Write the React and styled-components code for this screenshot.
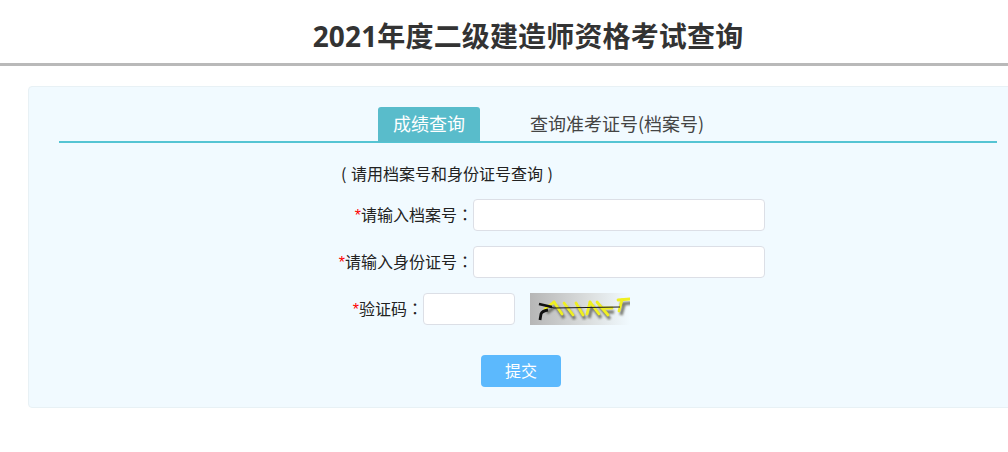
import React from 'react'
import styled, { createGlobalStyle } from 'styled-components'

const GlobalStyle = createGlobalStyle`
  html, body {
    margin: 0;
    padding: 0;
    background: #fff;
    overflow: hidden;
  }
  body {
    font-family: "Noto Sans CJK SC", "Liberation Sans", sans-serif;
    color: #333;
  }
  * {
    box-sizing: border-box;
  }
`

const Page = styled.div`
  width: 1056px;
`

const Header = styled.header`
  height: 66px;
  padding-top: 8px;
  border-bottom: 3px solid #b9b9b9;
  display: flex;
  align-items: center;
  justify-content: center;
`

const Title = styled.h1`
  margin: 0;
  font-family: "Open Sans", "Noto Sans CJK SC", sans-serif;
  font-size: 28px;
  line-height: 40px;
  font-weight: 700;
  letter-spacing: 0.15px;
  color: #333;
`

const Panel = styled.main`
  width: 1000px;
  height: 322px;
  margin: 20px 28px 0;
  padding: 20px 30px 0;
  background: #f1faff;
  border: 1px solid #e8f1f5;
  border-radius: 4px;
`

const Tabs = styled.div`
  display: flex;
  height: 36px;
  padding-left: 319px;
  border-bottom: 2px solid #55c4d3;
`

const Tab = styled.div`
  height: 35px;
  padding: 0 15px;
  margin-right: ${(p) => (p.$active ? '35px' : '0')};
  font-size: 18px;
  line-height: 33px;
  white-space: nowrap;
  color: ${(p) => (p.$active ? '#fff' : '#444')};
  background: ${(p) => (p.$active ? '#59bccb' : 'transparent')};
  border-radius: 3px 3px 0 0;
`

const Form = styled.form`
  padding: 18px 0 0 271px;
`

const Hint = styled.p`
  margin: 0 0 14px 11px;
  font-size: 16px;
  line-height: 24px;
  word-spacing: 1px;
  color: #222;
  white-space: pre;
`

const Row = styled.div`
  display: flex;
  align-items: center;
  height: 32px;
  margin-bottom: 15px;
`

const Label = styled.label`
  width: ${(p) => p.$width}px;
  padding-bottom: 3px;
  font-size: 16px;
  color: #222;
  text-align: right;
  white-space: nowrap;
`

const Star = styled.span`
  color: #f00;
  font-family: "Liberation Sans", sans-serif;
`

// the TC face centres the full-width colon in its cell, as the reference does
const Colon = styled.span`
  font-family: "Noto Sans CJK TC", sans-serif;
`

const Input = styled.input`
  width: ${(p) => p.$width}px;
  height: 32px;
  padding: 0 10px;
  background: #fff;
  border: 1px solid #dcdfe6;
  border-radius: 4px;
  outline: none;
`

const Captcha = styled.svg`
  display: block;
  margin-left: 15px;
`

const SubmitRow = styled.div`
  padding: 15px 0 0 151px;
`

const Submit = styled.button`
  display: block;
  width: 80px;
  height: 32px;
  padding: 0 0 2px;
  font-family: inherit;
  font-size: 16px;
  color: #fff;
  background: #5cb9fd;
  border: 0;
  border-radius: 4px;
`

const captchaStrokes = [
  'M15 16 L24 9', 'M24 9 L32 21', 'M34 10 L43 22', 'M46 10 L53 22', 'M57 21 L60 9',
  'M60 9 L69 21', 'M67 9 L78 22', 'M72 15 L82 15', 'M88 7 L100 6', 'M92 7 L89 18',
]

function CaptchaImage() {
  return (
    <Captcha width="100" height="32" viewBox="0 0 100 32">
      <defs>
        <linearGradient id="captchaBg" x1="0" x2="1" y1="0" y2="0">
          <stop offset="0" stopColor="#b6b6b6" />
          <stop offset="0.6" stopColor="#dcdfdf" />
          <stop offset="1" stopColor="#f1faff" />
        </linearGradient>
        <filter id="captchaBlur">
          <feGaussianBlur stdDeviation="1.1" />
        </filter>
        <filter id="captchaSoft">
          <feGaussianBlur stdDeviation="0.4" />
        </filter>
      </defs>
      <rect width="100" height="32" fill="url(#captchaBg)" />
      <g stroke="#55554a" strokeWidth="3.4" opacity="0.75" fill="none" filter="url(#captchaBlur)" transform="translate(2 4)">
        {captchaStrokes.map((d) => (
          <path key={d} d={d} />
        ))}
      </g>
      <g stroke="#efef20" strokeWidth="2.8" fill="none" strokeLinecap="round" filter="url(#captchaSoft)">
        {captchaStrokes.map((d) => (
          <path key={d} d={d} />
        ))}
      </g>
      <path d="M9 11 L24 15 L90 14" stroke="#1c1c1c" strokeWidth="1.1" fill="none" />
      <path d="M9 11 L22 14" stroke="#111" strokeWidth="2.4" fill="none" />
      <path d="M10 27 L11 21 Q12 18 18 17" stroke="#111" strokeWidth="2.8" fill="none" />
    </Captcha>
  )
}

export default function App() {
  return (
    <React.Fragment>
      <GlobalStyle />
      <Page>
        <Header>
          <Title>2021年度二级建造师资格考试查询</Title>
        </Header>
        <Panel>
          <Tabs>
            <Tab $active>成绩查询</Tab>
            <Tab>查询准考证号(档案号)</Tab>
          </Tabs>
          <Form onSubmit={(e) => e.preventDefault()}>
            <Hint>( 请用档案号和身份证号查询 )</Hint>
            <Row>
              <Label $width={143}><Star>*</Star>请输入档案号<Colon>：</Colon></Label>
              <Input $width={292} />
            </Row>
            <Row>
              <Label $width={143}><Star>*</Star>请输入身份证号<Colon>：</Colon></Label>
              <Input $width={292} />
            </Row>
            <Row>
              <Label $width={93}><Star>*</Star>验证码<Colon>：</Colon></Label>
              <Input $width={92} />
              <CaptchaImage />
            </Row>
            <SubmitRow>
              <Submit type="submit">提交</Submit>
            </SubmitRow>
          </Form>
        </Panel>
      </Page>
    </React.Fragment>
  )
}
